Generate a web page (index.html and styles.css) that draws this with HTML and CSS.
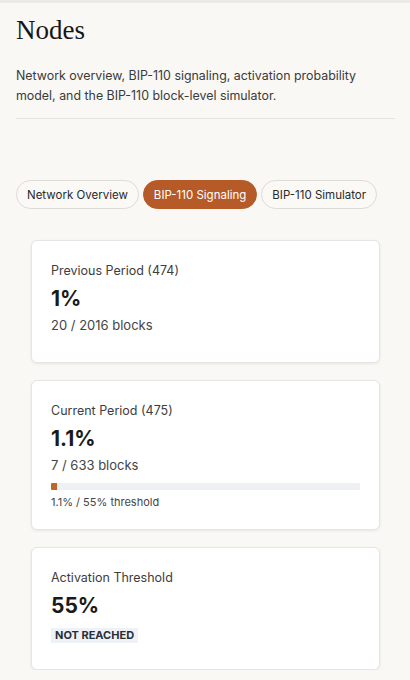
FILE: index.html
```html
<!DOCTYPE html>
<html>
<head>
<meta charset="utf-8">
<link rel="stylesheet" href="styles.css">
</head>
<body>
<div class="topbar"></div>
<main class="page">
  <h1 class="title">Nodes</h1>
  <p class="desc">Network overview, BIP-110 signaling, activation probability model, and the BIP-110 block-level simulator.</p>
  <hr class="divider">
  <nav class="tabs">
    <button class="tab">Network Overview</button>
    <button class="tab active">BIP-110 Signaling</button>
    <button class="tab">BIP-110 Simulator</button>
  </nav>
  <section class="cards">
    <div class="card">
      <div class="label">Previous Period (474)</div>
      <div class="value">1%</div>
      <div class="sub">20 / 2016 blocks</div>
    </div>
    <div class="card">
      <div class="label">Current Period (475)</div>
      <div class="value">1.1%</div>
      <div class="sub">7 / 633 blocks</div>
      <div class="bar"><div class="fill" style="width:2%"></div></div>
      <div class="note">1.1% / 55% threshold</div>
    </div>
    <div class="card">
      <div class="label">Activation Threshold</div>
      <div class="value">55%</div>
      <div class="badge-row"><span class="badge">NOT REACHED</span></div>
    </div>
  </section>
</main>
</body>
</html>
```
FILE: styles.css
```css
* { box-sizing: border-box; }
html, body { margin: 0; padding: 0; }
body {
  background: #f9f8f5;
  font-family: Inter, "Noto Sans", sans-serif;
  color: #1f1f1f;
}
.topbar { height: 3px; background: #ebeae6; }
.page { padding: 0 15px 0 16px; }
.title {
  font-family: "Liberation Serif", serif;
  font-weight: 400;
  font-size: 27px;
  line-height: 32px;
  margin: 11px 0 0;
  color: #151515;
}
.desc {
  margin: 20px 0 0;
  max-width: 350px;
  font-size: 12.4px;
  line-height: 19.5px;
  color: #3a3a3a;
}
.divider {
  border: 0;
  border-top: 1px solid #e6e4df;
  margin: 13px 0 0;
}
.tabs {
  display: flex;
  gap: 4px;
  margin-top: 61px;
}
.tab {
  flex: 0 0 auto;
  white-space: nowrap;
  font-family: Inter, "Noto Sans", sans-serif;
  font-size: 11.5px;
  height: 29px;
  padding: 0 10px;
  border: 1px solid #dddbd6;
  border-radius: 15px;
  background: #faf9f6;
  color: #2a2a2a;
}
.tab.active {
  background: #b65a27;
  border-color: #b65a27;
  color: #fff;
}
.cards {
  display: flex;
  flex-direction: column;
  gap: 17px;
  margin: 31px 15px 0;
}
.card {
  background: #fff;
  border: 1px solid #e6e5e2;
  border-radius: 6px;
  box-shadow: 0 1px 3px rgba(0,0,0,0.08);
  padding: 20px 19px 19px;
}
.label {
  font-size: 12.5px;
  line-height: 20px;
  color: #3d3d3d;
}
.value {
  font-size: 21px;
  font-weight: 700;
  line-height: 28px;
  margin-top: 4px;
  color: #1a1a1a;
}
.sub {
  font-size: 13px;
  line-height: 20px;
  margin: 2px 0 8px;
  color: #444;
}
.bar {
  height: 7px;
  background: #eef0f3;
  border-radius: 1px;
  overflow: hidden;
}
.fill { height: 100%; background: #c0652c; }
.note {
  font-size: 11px;
  line-height: 16px;
  margin-top: 4px;
  color: #444;
}
.badge-row { margin: 6px 0 7px; line-height: 15px; }
.badge {
  display: inline-block;
  background: #eef2f6;
  color: #2a2f36;
  font-size: 11px;
  font-weight: 700;
  line-height: 15px;
  padding: 0 4px;
}
```
